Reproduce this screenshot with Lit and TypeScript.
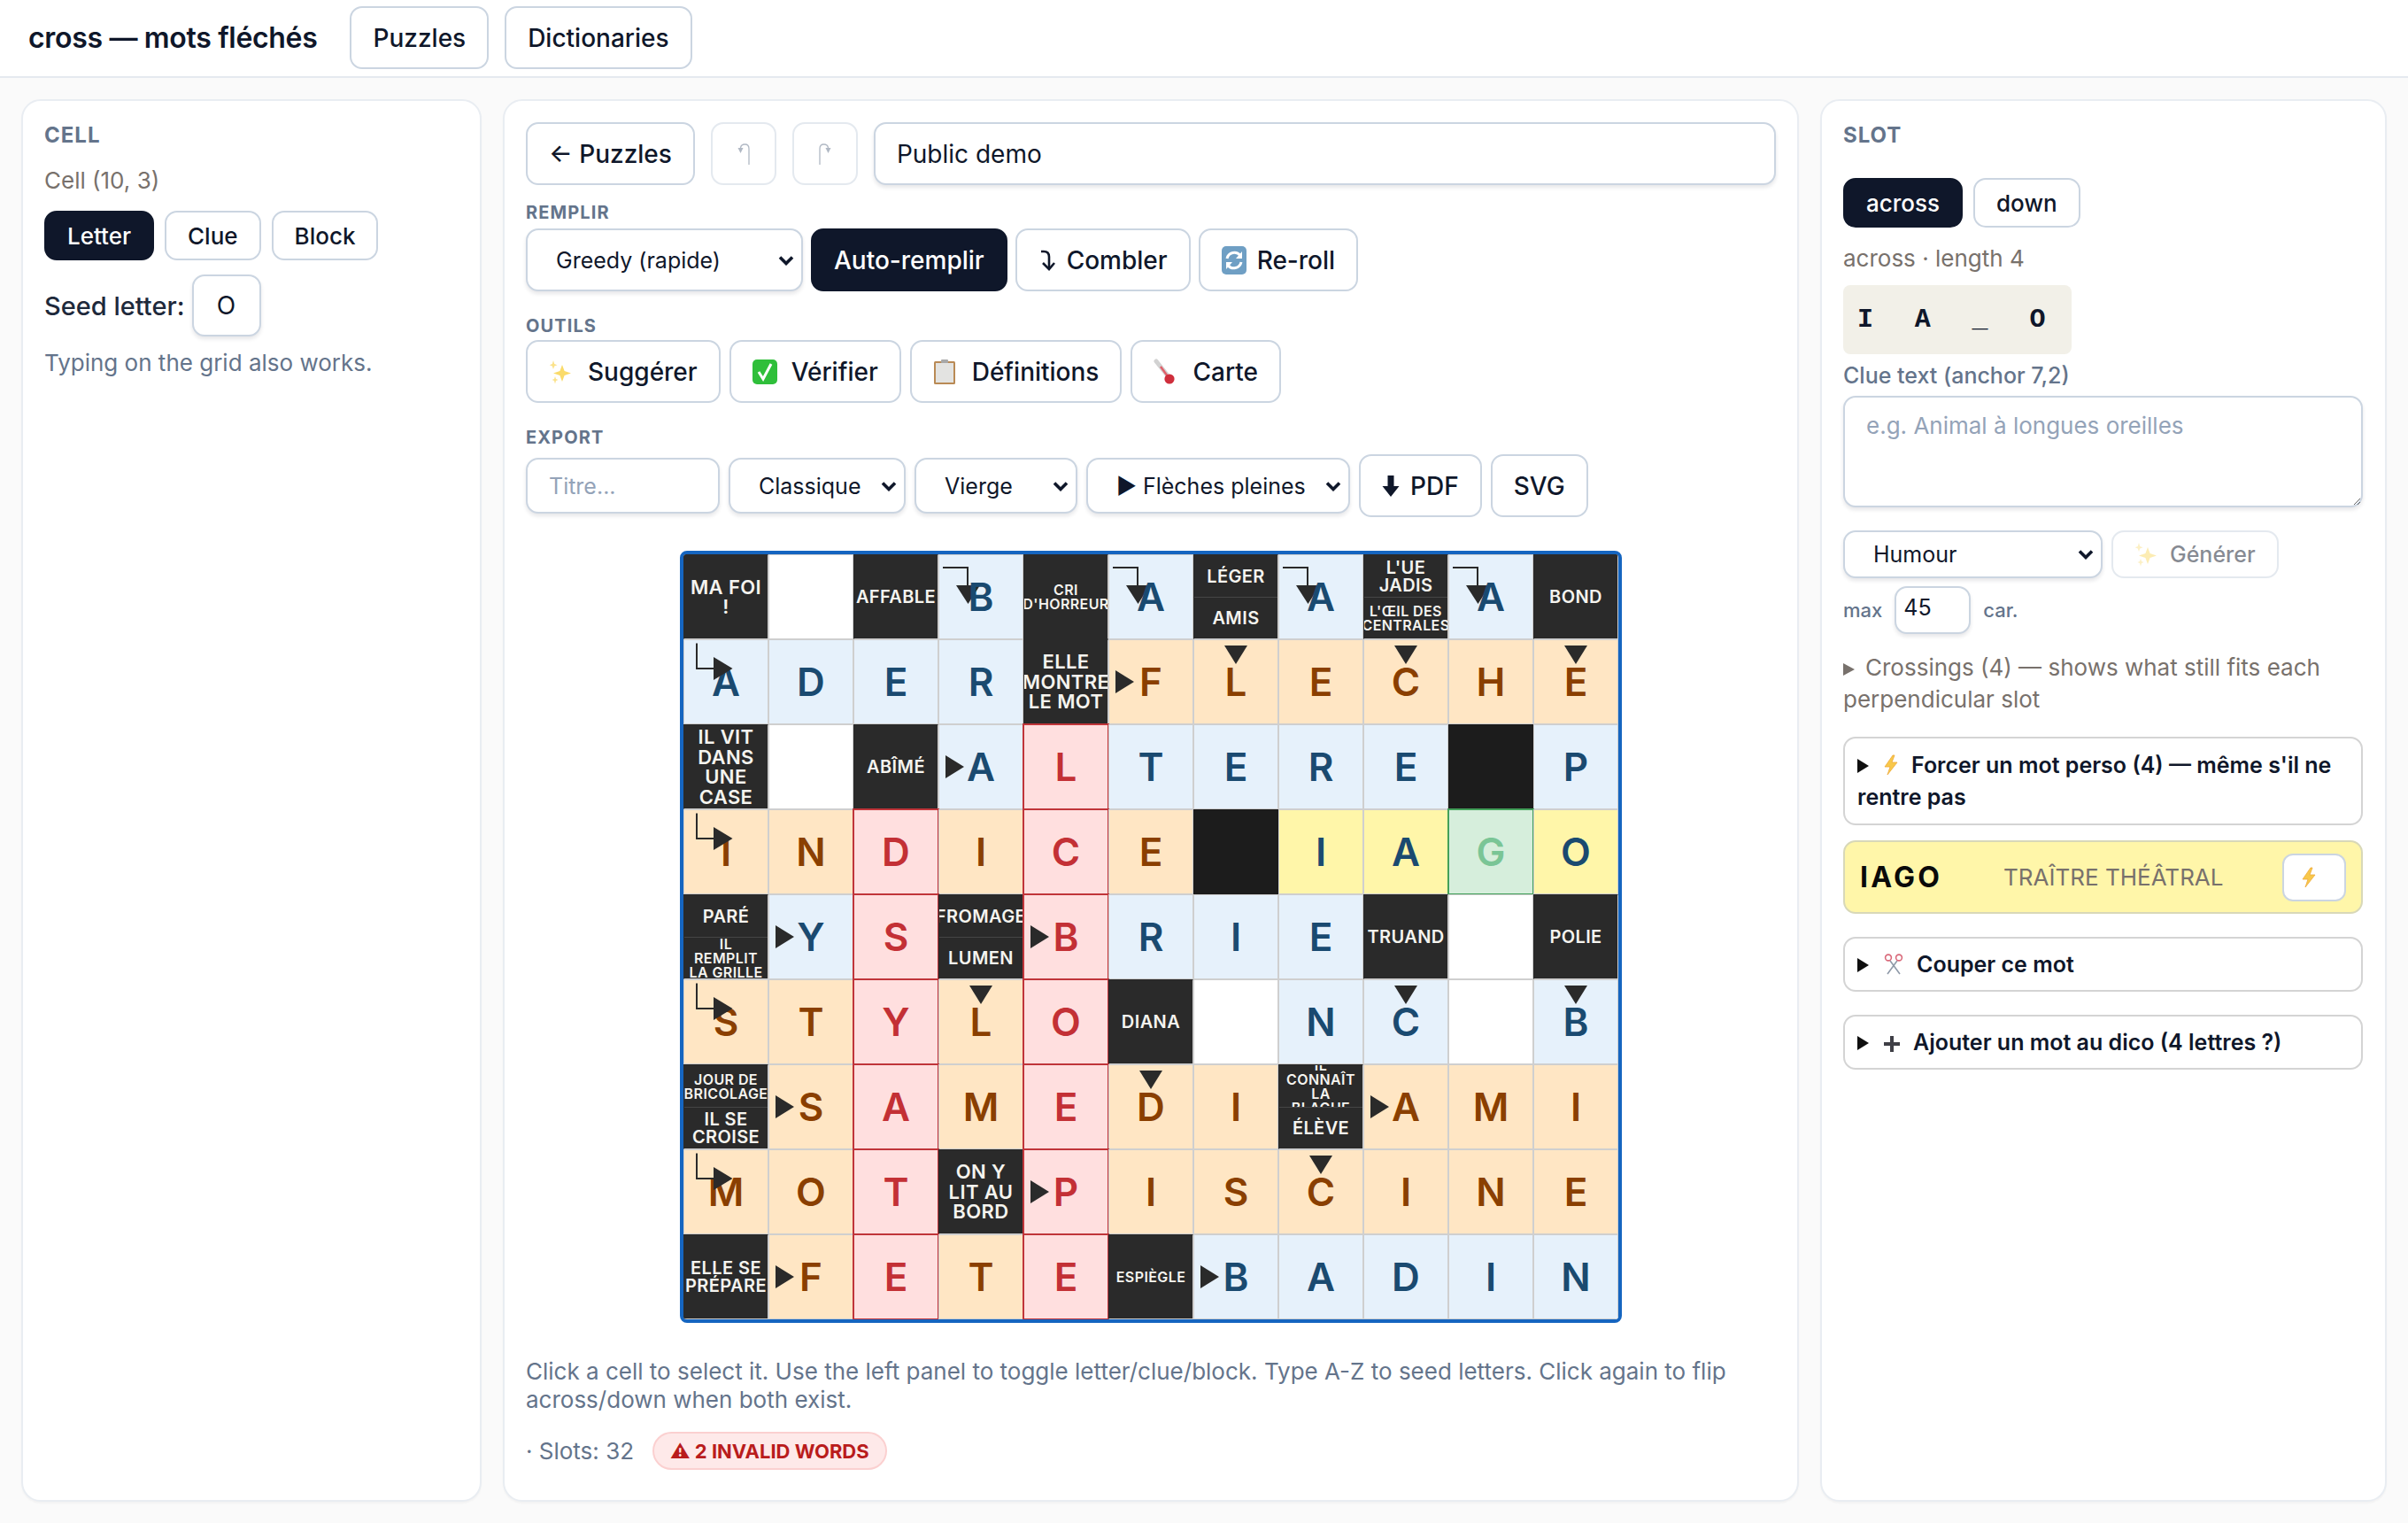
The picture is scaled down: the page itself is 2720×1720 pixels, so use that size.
import { LitElement, html, css, nothing } from "lit";
import { customElement } from "lit/decorators.js";

type Cell = {
  k: "w" | "x" | "c" | "s" | "l";
  t?: string; s?: number; t2?: string; s2?: number;
  l?: string; bg?: string; a?: string;
};
const W: Cell = { k: "w" };
const X: Cell = { k: "x" };
const c = (t: string, s = 20): Cell => ({ k: "c", t, s });
const sp = (t: string, s: number, t2: string, s2: number): Cell => ({ k: "s", t, s, t2, s2 });
const L = (l: string, bg: string, a?: string): Cell => ({ k: "l", l, bg, a });
const row = (bg: string, str: string) => str.split(" ").map((x) => {
  const [l, a] = x.split(":");
  return L(l, bg, a);
});

const GRID: Cell[][] = [
  [c("MA FOI|!", 22), W, c("AFFABLE", 20), L("B", "b", "cd"), c("CRI|D'HORREUR", 16), L("A", "b", "cd"), sp("LÉGER", 20, "AMIS", 20), L("A", "b", "cd"), sp("L'UE|JADIS", 20, "L'ŒIL DES|CENTRALES", 16), L("A", "b", "cd"), c("BOND", 20)],
  [L("A", "b", "cr"), ...row("b", "D E R"), c("ELLE|MONTRE|LE MOT", 22), L("F", "o", "r"), L("L", "o", "d"), L("E", "o"), L("C", "o", "d"), L("H", "o"), L("E", "o", "d")],
  [c("IL VIT|DANS|UNE|CASE", 22), W, c("ABÎMÉ", 20), L("A", "b", "r"), L("L", "p"), ...row("b", "T E R E"), X, L("P", "b")],
  [L("I", "o", "cr"), L("N", "o"), L("D", "p"), L("I", "o"), L("C", "p"), L("E", "o"), X, L("I", "y"), L("A", "y"), L("G", "g"), L("O", "y")],
  [sp("PARÉ", 20, "IL|REMPLIT|LA GRILLE", 16), L("Y", "b", "r"), L("S", "p"), sp("FROMAGE", 20, "LUMEN", 20), L("B", "p", "r"), ...row("b", "R I E"), c("TRUAND", 20), W, c("POLIE", 20)],
  [L("S", "o", "cr"), L("T", "o"), L("Y", "p"), L("L", "o", "d"), L("O", "p"), c("DIANA", 20), W, L("N", "b"), L("C", "b", "d"), W, L("B", "b", "d")],
  [sp("JOUR DE|BRICOLAGE", 16, "IL SE|CROISE", 20), L("S", "o", "r"), L("A", "p"), L("M", "o"), L("E", "p"), L("D", "o", "d"), L("I", "o"), sp("IL|CONNAÎT|LA|BLAGUE", 16, "ÉLÈVE", 20), L("A", "o", "r"), L("M", "o"), L("I", "o")],
  [L("M", "o", "cr"), L("O", "o"), L("T", "p"), c("ON Y|LIT AU|BORD", 22), L("P", "p", "r"), L("I", "o"), L("S", "o"), L("C", "o", "d"), L("I", "o"), L("N", "o"), L("E", "o")],
  [c("ELLE SE|PRÉPARE", 20), L("F", "o", "r"), L("E", "p"), L("T", "o"), L("E", "p"), c("ESPIÈGLE", 16), L("B", "b", "r"), L("A", "b"), L("D", "b"), L("I", "b"), L("N", "b")],
];

const sparkle = html`<svg class="ico" width="26" height="28" viewBox="0 0 26 28"><path d="M15 6 L17.6 13 L25 15.5 L17.6 18 L15 25 L12.4 18 L5 15.5 L12.4 13Z" fill="#fadb6a"/><path d="M5 1 L6.2 5 L9.5 6.2 L6.2 7.4 L5 11 L3.8 7.4 L.8 6.2 L3.8 5Z" fill="#fbe28a"/><path d="M7 19 L8 22 L10.5 23 L8 24 L7 27.5 L6 24 L3.5 23 L6 22Z" fill="#fbe28a"/></svg>`;
const check = html`<svg class="ico" width="28" height="28" viewBox="0 0 28 28"><rect width="28" height="28" rx="5" fill="#2fbf3a"/><path d="M7 14 L12 22 L21 5" fill="none" stroke="#fff" stroke-width="3"/></svg>`;
const clip = html`<svg class="ico" width="26" height="30" viewBox="0 0 26 30"><rect x="1" y="3" width="24" height="26" rx="1.5" fill="#b98a55"/><rect x="3" y="5" width="20" height="22" fill="#e3e3e1"/><rect x="9" y="1" width="8" height="4" rx="1" fill="#a8a8a8"/></svg>`;
const thermo = html`<svg class="ico" width="26" height="30" viewBox="0 0 26 30"><path d="M3 3 L15 18" stroke="#d2d2d2" stroke-width="5" stroke-linecap="round"/><path d="M8 9 L16 20" stroke="#e0606a" stroke-width="2.4"/><circle cx="18" cy="23" r="5.6" fill="#cf2e3c"/></svg>`;
const reroll = html`<svg class="ico" width="28" height="32" viewBox="0 0 28 32"><rect width="28" height="32" rx="5" fill="#6f9fc4"/><path d="M6 14 A8.5 8.5 0 0 1 21 10.5" fill="none" stroke="#fff" stroke-width="3"/><path d="M23 6 V14 H16Z" fill="#fff"/><path d="M22 18 A8.5 8.5 0 0 1 7 21.5" fill="none" stroke="#fff" stroke-width="3"/><path d="M5 26 V18 H12Z" fill="#fff"/></svg>`;
const bolt = html`<svg class="bolt" width="18" height="24" viewBox="0 0 18 24"><path d="M11 1 L2 14 H8 L5 23 L16 9 H10 L13 1Z" fill="#f8c84a" stroke="#eda93a" stroke-width=".8"/></svg>`;
const scissors = html`<svg class="bolt" width="24" height="24" viewBox="0 0 24 24"><path d="M8 8 L19 23 M16 8 L5 23" stroke="#8f9aa8" stroke-width="1.6" fill="none"/><circle cx="6" cy="4.5" r="3.4" fill="none" stroke="#d9697a" stroke-width="1.6"/><circle cx="18" cy="4.5" r="3.4" fill="none" stroke="#d9697a" stroke-width="1.6"/></svg>`;
const plus = html`<svg class="bolt" width="20" height="20" viewBox="0 0 20 20"><path d="M10 1 V19 M1 10 H19" stroke="#3f3f46" stroke-width="4"/></svg>`;
const undo = html`<svg width="16" height="26" viewBox="0 0 16 26"><path d="M14 25 V7 Q14 2 9.5 2 Q5 2 4.5 6" fill="none" stroke="#64748b" stroke-width="1.3"/><path d="M1.5 6 H7.5 L4.5 12Z" fill="#64748b"/></svg>`;
const redo = html`<svg width="16" height="26" viewBox="0 0 16 26"><path d="M2 25 V7 Q2 2 6.5 2 Q11 2 11.5 6" fill="none" stroke="#64748b" stroke-width="1.3"/><path d="M8.5 6 H14.5 L11.5 12Z" fill="#64748b"/></svg>`;
const fillIco = html`<svg width="20" height="24" viewBox="0 0 20 24"><path d="M3 2 H6 Q12 2 12 8 V21" fill="none" stroke="#0f172a" stroke-width="2.6"/><path d="M5 15 L12 22 L18 15" fill="none" stroke="#0f172a" stroke-width="2.6"/></svg>`;
const down = html`<svg width="20" height="24" viewBox="0 0 20 24"><path d="M6.5 0 H13.5 V12 H19.5 L10 24 L.5 12 H6.5Z" fill="#0f172a"/></svg>`;

function arrow(a?: string) {
  if (!a) return nothing;
  const dark = "#2a2a2a";
  if (a === "r") return html`<svg class="arr" viewBox="0 0 96 96"><path d="M8 35 L29 48 L8 61Z" fill=${dark}/></svg>`;
  if (a === "d") return html`<svg class="arr" viewBox="0 0 96 96"><path d="M35 7 H61 L48 28Z" fill=${dark}/></svg>`;
  if (a === "cr") return html`<svg class="arr top" viewBox="0 0 96 96"><path d="M15 4.5 V33 H36" fill="none" stroke=${dark} stroke-width="2"/><path d="M34 20 L55.5 33 L34 46Z" fill=${dark}/></svg>`;
  return html`<svg class="arr" viewBox="0 0 96 96"><path d="M5 15 H33 V36" fill="none" stroke=${dark} stroke-width="2"/><path d="M20 35 H47 L33.5 56Z" fill=${dark}/></svg>`;
}

function lines(t: string, s: number) {
  return html`<div class="cl" style="font-size:${s}px;line-height:${s === 16 ? 16 : s === 22 ? 22.5 : 20}px">${t.split("|").map((x) => html`<div>${x}</div>`)}</div>`;
}

@customElement("app-root")
export class AppRoot extends LitElement {
  static styles = css`
    :host { display: block; min-height: 1720px; background: #fafafa; font-family: Inter, "Noto Sans", sans-serif; color: #0f172a; }
    * { box-sizing: border-box; }
    header { height: 88px; background: #fff; border-bottom: 2px solid #e5e9ef; display: flex; align-items: center; padding: 0 32px 1px; }
    h1 { margin: 0 37px 0 0; font-size: 32px; font-weight: 600; letter-spacing: -0.32px; }
    .hbtns { display: flex; gap: 18px; }
    .btn { height: 71px; padding: 0 24px; background: #fff; border: 2px solid #cbd5e1; border-radius: 14px; font: 500 28px Inter, sans-serif; color: #0f172a; display: inline-flex; align-items: center; gap: 12px; white-space: nowrap; }
    .btn.dark { background: #0f172a; border-color: #0f172a; color: #fff; }
    .btn.off { opacity: .5; }
    .ic { width: 74px; padding: 0; justify-content: center; }
    main { display: grid; grid-template-columns: 520px 1464px 640px; gap: 24px; padding: 24px; height: 1632px; }
    .panel { background: #fff; border: 2px solid #e9edf2; border-radius: 22px; padding: 24px; box-shadow: 0 2px 2px rgba(15,23,42,.03); min-width: 0; }
    .h { font-size: 24px; font-weight: 700; letter-spacing: 1px; color: #64748b; line-height: 30px; }
    .sm { height: 56px; padding: 0 24px; font-size: 26px; border-radius: 14px; }
    .seg { display: flex; gap: 12px; }
    .mut { font-size: 26px; color: #78716c; line-height: 36px; }
    .slate { color: #64748b; font-size: 26px; line-height: 36px; }
    .seed { display: flex; align-items: center; gap: 8px; margin-top: 16px; font-size: 29px; font-weight: 500; color: #1e293b; }
    .inp { background: #fff; border: 2px solid #cbd5e1; border-radius: 14px; box-shadow: 0 3px 4px rgba(15,23,42,.1); font-family: Inter, sans-serif; color: #0f172a; outline: none; }
    .inp::placeholder { color: #94a3b8; opacity: 1; }
    .seedin { width: 78px; height: 70px; text-align: center; font-size: 28px; padding: 0; }
    .sec { font-size: 20px; font-weight: 700; letter-spacing: 1.1px; color: #64748b; line-height: 24px; }
    .row { display: flex; align-items: center; gap: 10px; }
    select.inp { appearance: none; -webkit-appearance: none; font-size: 25px; padding: 0 0 0 32px; background-repeat: no-repeat; background-position: right 8px center; background-size: 18px 12px;
      background-image: url("data:image/svg+xml,%3Csvg xmlns='http://www.w3.org/2000/svg' viewBox='0 0 18 12'%3E%3Cpath d='M2 2.5 L9 9.5 L16 2.5' fill='none' stroke='%230f172a' stroke-width='3.6'/%3E%3C/svg%3E"); }
    .title { flex: 1; height: 71px; padding: 0 24px; font-size: 28px; }
    .gridwrap { display: flex; justify-content: center; margin-top: 38px; }
    .grid { display: grid; grid-template-columns: repeat(11, 96px); grid-auto-rows: 96px; border: 4px solid #1565c0; border-radius: 8px; overflow: hidden; background: #fff; }
    .cell { position: relative; border: 1px solid #cfcfcf; display: flex; align-items: center; justify-content: center; overflow: visible; }
    .cell.b { background: #e6f1fb; color: #1a4a70; }
    .cell.o { background: #ffe6c4; color: #8a3f00; }
    .cell.p { background: #ffdfdf; color: #c33035; outline: 2px solid #c0353a; outline-offset: -1px; }
    .cell.y { background: #fff6a9; color: #1a4a70; }
    .cell.g { background: #d6eedc; color: #7ac596; outline: 2px solid #43a05a; outline-offset: -1px; }
    .cell.w { background: #fff; }
    .cell.x { background: #1c1c1c; border-color: #1c1c1c; }
    .cell.c, .cell.s { background: #2a2a2a; border-color: #2a2a2a #cfcfcf #cfcfcf #2a2a2a; overflow: hidden; }
    .cell.nb { border-bottom-color: #2a2a2a; }
    .cell.s { flex-direction: column; align-items: stretch; }
    .half { height: 47px; flex: none; display: flex; align-items: center; justify-content: center; overflow: hidden; }
    .half + .half { border-top: 1px solid #454545; }
    .cl { color: #f5f4ef; font-weight: 600; letter-spacing: .4px; text-align: center; white-space: nowrap; }
    .lt { position: relative; z-index: 1; font-size: 44px; font-weight: 600; line-height: 1; }
    .arr { position: absolute; left: -1px; top: -1px; width: 96px; height: 96px; }
    .arr.top { z-index: 2; }
    .help { margin: 39px 0 0; font-size: 26px; line-height: 32px; color: #64748b; }
    .stats { display: flex; align-items: center; gap: 21px; margin-top: 20px; font-size: 26px; color: #64748b; }
    .badge { height: 43px; padding: 0 18px; display: flex; align-items: center; background: #fee9e9; border: 2px solid #fbd0d0; border-radius: 22px; color: #b91c1c; font-size: 22px; font-weight: 700; white-space: nowrap; gap: 6px; }
    .pat { display: inline-block; height: 78px; line-height: 78px; padding: 0 0 0 16px; width: 258px; background: #f2f0e8; border-radius: 8px; font: 700 30px/78px "Liberation Mono", monospace; letter-spacing: 14.4px; white-space: pre; }
    .lab { font-size: 25px; font-weight: 500; color: #64748b; line-height: 32px; }
    textarea.inp { display: block; width: 587px; height: 126px; padding: 14px 24px; font-size: 26px; line-height: 36px; resize: vertical; }
    .gen { height: 54px; padding: 0 24px; font-size: 25px; border-radius: 14px; }
    .small { font-size: 22px; color: #64748b; font-weight: 500; }
    .maxin { width: 86px; height: 54px; font-size: 25px; padding: 0 8px 6px; }
    .cross { margin-top: 20px; font-size: 26px; line-height: 36px; color: #78716c; }
    .cross .mk { display: inline-block; width: 0; height: 0; border-style: solid; border-width: 7.5px 0 7.5px 13px; border-color: transparent transparent transparent #78716c; margin-right: 12px; }
    .det { width: 587px; border: 2px solid #d4d4d4; border-radius: 14px; padding: 12px 14px; font-size: 25px; font-weight: 600; line-height: 36px; color: #0f172a; }
    .det .mk { display: inline-block; width: 0; height: 0; border-style: solid; border-width: 8px 0 8px 13px; border-color: transparent transparent transparent #0f0f0f; margin-right: 16px; }
    .bolt { vertical-align: -3px; margin-right: 14px; }
    .word { width: 587px; height: 83px; margin: 17px 0 26px; border: 2px solid #d8d8b8; border-radius: 14px; background: #fff6a9; display: flex; align-items: center; padding: 0 17px 0 17px; }
    .word b { width: 162px; font-size: 32px; font-weight: 700; letter-spacing: 3.2px; color: #0a0a0a; }
    .word span { flex: 1; font-size: 26px; color: #78716c; }
    .bbtn { width: 72px; height: 54px; background: #fff; border: 2px solid #cbd5e1; border-radius: 12px; display: flex; align-items: center; justify-content: center; padding-right: 18px; }
    .bbtn .bolt { margin: 0; }
  `;

  render() {
    return html`
      <header>
        <h1>cross — mots fléchés</h1>
        <div class="hbtns"><button class="btn">Puzzles</button><button class="btn">Dictionaries</button></div>
      </header>
      <main>
        <section class="panel">
          <div class="h">CELL</div>
          <div class="mut" style="margin-top:18px">Cell (10, 3)</div>
          <div class="seg" style="margin-top:16px">
            <button class="btn sm dark">Letter</button><button class="btn sm">Clue</button><button class="btn sm">Block</button>
          </div>
          <div class="seed"><span>Seed letter:</span><input class="inp seedin" .value=${"O"} /></div>
          <div class="slate" style="margin-top:12px">Typing on the grid also works.</div>
        </section>

        <section class="panel">
          <div class="row" style="gap:18px">
            <button class="btn">← Puzzles</button>
            <button class="btn off ic">${undo}</button>
            <button class="btn off ic">${redo}</button>
            <input class="inp title" .value=${"Public demo"} />
          </div>
          <div class="sec" style="margin:19px 0 6px">REMPLIR</div>
          <div class="row" style="gap:9px">
            <select class="inp" style="width:313px;height:71px"><option>Greedy (rapide)</option></select>
            <button class="btn dark">Auto-remplir</button>
            <button class="btn">${fillIco}Combler</button>
            <button class="btn">${reroll}Re-roll</button>
          </div>
          <div class="sec" style="margin:27px 0 4px">OUTILS</div>
          <div class="row">
            <button class="btn" style="gap:18px">${sparkle}Suggérer</button>
            <button class="btn" style="gap:16px">${check}Vérifier</button>
            <button class="btn" style="gap:18px">${clip}Définitions</button>
            <button class="btn" style="gap:18px">${thermo}Carte</button>
          </div>
          <div class="sec" style="margin:27px 0 7px">EXPORT</div>
          <div class="row">
            <input class="inp" style="width:219px;height:63px;padding:0 24px;font-size:25px" placeholder="Titre..." />
            <select class="inp" style="width:200px;height:63px"><option>Classique</option></select>
            <select class="inp" style="width:184px;height:63px"><option>Vierge</option></select>
            <select class="inp" style="width:298px;height:63px"><option>▶ Flèches pleines</option></select>
            <button class="btn">${down}PDF</button>
            <button class="btn">SVG</button>
          </div>
          <div class="gridwrap">
            <div class="grid">${GRID.map((r, ri) => r.map((cell, ci) => this.cell(cell, ri, ci)))}</div>
          </div>
          <p class="help">Click a cell to select it. Use the left panel to toggle letter/clue/block. Type A-Z to seed letters. Click again to flip across/down when both exist.</p>
          <div class="stats"><span>· Slots: 32</span><span class="badge">⚠ 2 INVALID WORDS</span></div>
        </section>

        <section class="panel">
          <div class="h">SLOT</div>
          <div class="seg" style="margin-top:33px">
            <button class="btn sm dark">across</button><button class="btn sm">down</button>
          </div>
          <div class="mut" style="margin-top:17px">across · length 4</div>
          <div class="pat" style="margin-top:12px">I A _ O</div>
          <div class="lab" style="margin-top:8px">Clue text (anchor 7,2)</div>
          <textarea class="inp" style="margin-top:7px" placeholder="e.g. Animal à longues oreilles"></textarea>
          <div class="row" style="margin-top:26px">
            <select class="inp" style="width:293px;height:54px"><option>Humour</option></select>
            <button class="btn off gen" style="gap:14px">${sparkle}Générer</button>
          </div>
          <div class="row small" style="gap:14px;margin-top:9px">
            <span>max</span><input class="inp maxin" .value=${"45"} /><span>car.</span>
          </div>
          <div class="cross"><span class="mk"></span>Crossings (4) — shows what still fits each perpendicular slot</div>
          <div class="det" style="margin-top:24px"><span class="mk"></span>${bolt}Forcer un mot perso (4) — même s'il ne rentre pas</div>
          <div class="word"><b>IAGO</b><span>TRAÎTRE THÉÂTRAL</span><button class="bbtn">${bolt}</button></div>
          <div class="det" style="padding:11px 14px"><span class="mk"></span>${scissors}Couper ce mot</div>
          <div class="det" style="padding:11px 14px;margin-top:26px"><span class="mk"></span>${plus}Ajouter un mot au dico (4 lettres ?)</div>
        </section>
      </main>
    `;
  }

  cell(cell: Cell, ri: number, ci: number) {
    if (cell.k === "w") return html`<div class="cell w"></div>`;
    if (cell.k === "x") return html`<div class="cell x"></div>`;
    if (cell.k === "c") {
      const nb = ri === 0 && ci === 4 ? "nb" : "";
      return html`<div class="cell c ${nb}">${lines(cell.t!, cell.s!)}</div>`;
    }
    if (cell.k === "s") {
      return html`<div class="cell s"><div class="half">${lines(cell.t!, cell.s!)}</div><div class="half">${lines(cell.t2!, cell.s2!)}</div></div>`;
    }
    return html`<div class="cell ${cell.bg}">${arrow(cell.a)}<span class="lt">${cell.l}</span></div>`;
  }
}
